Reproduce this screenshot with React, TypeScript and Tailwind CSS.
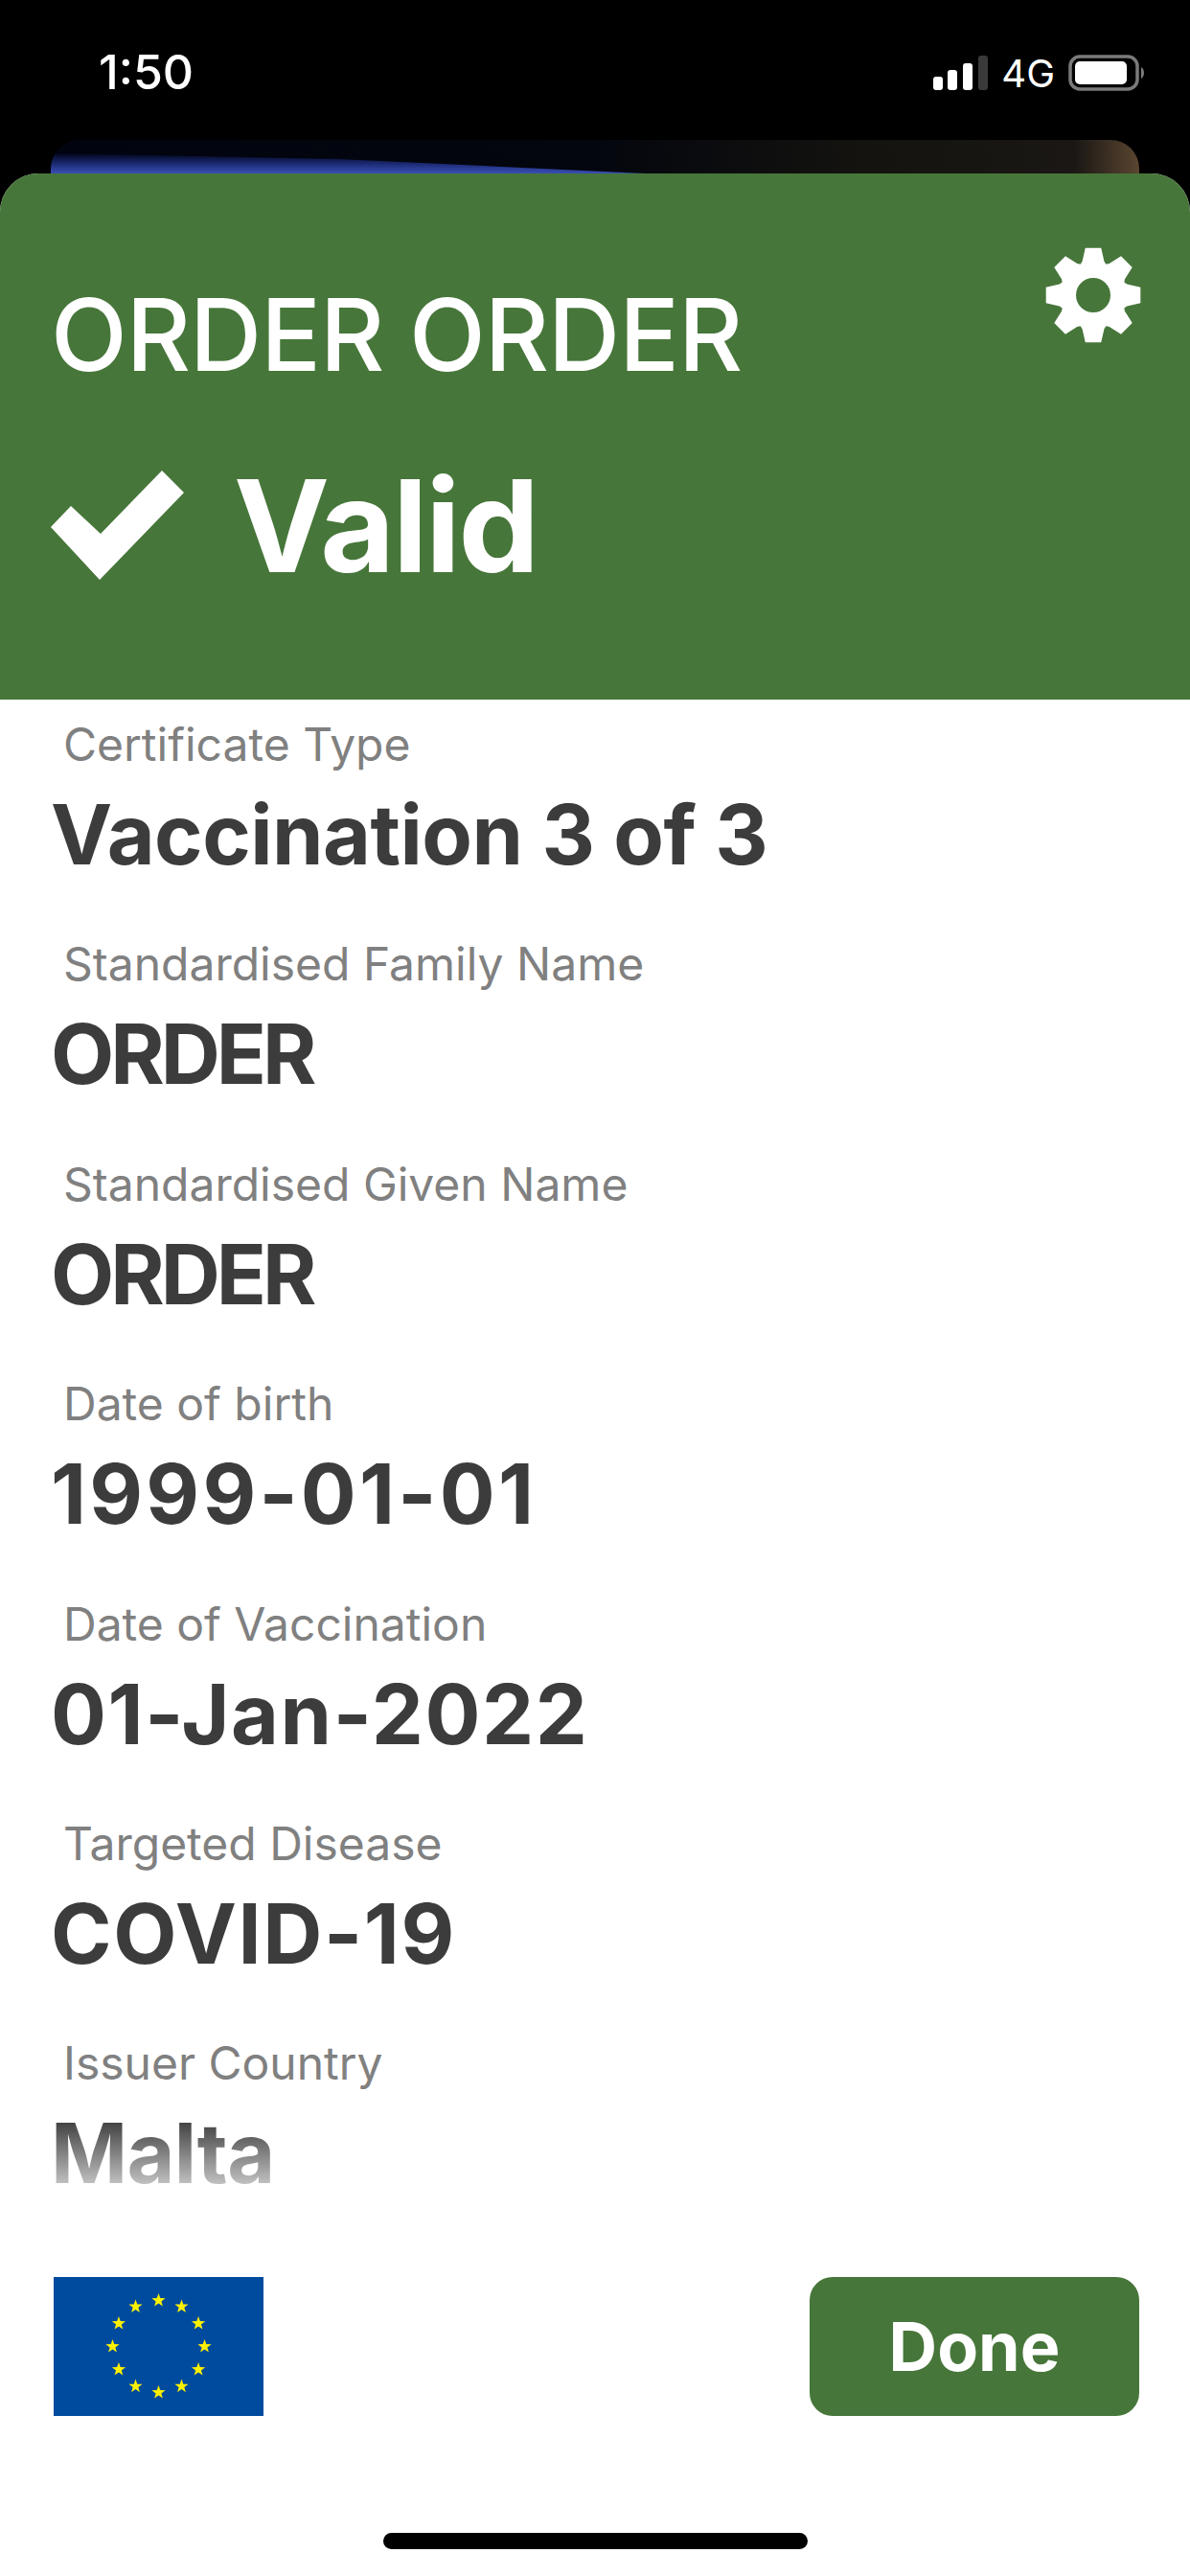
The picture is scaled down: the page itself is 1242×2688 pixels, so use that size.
import React from "react";

const rows = [
  ["Certificate Type", "Vaccination 3 of 3", "tracking-[-0.5px]"],
  ["Standardised Family Name", "ORDER", "tracking-[-4px]"],
  ["Standardised Given Name", "ORDER", "tracking-[-4px]"],
  ["Date of birth", "1999-01-01", "tracking-[3.2px]"],
  ["Date of Vaccination", "01-Jan-2022", "tracking-[1.6px]"],
  ["Targeted Disease", "COVID-19", "tracking-[1.6px]"],
  ["Issuer Country", "Malta", "tracking-[-0.6px]"],
];

function gearPath(cx: number, cy: number) {
  const pts: string[] = [];
  for (let i = 0; i < 8; i++) {
    const a = (i * 45 - 90) * (Math.PI / 180);
    const list: [number, number][] = [
      [35, -22.5],
      [37, -18],
      [50, -9.5],
      [50, 9.5],
      [37, 18],
    ];
    for (const [r, d] of list) {
      const t = a + (d * Math.PI) / 180;
      pts.push(`${(cx + r * Math.cos(t)).toFixed(2)} ${(cy + r * Math.sin(t)).toFixed(2)}`);
    }
  }
  return `M${pts.join("L")}Z M${cx + 18} ${cy}a18 18 0 1 0 -36 0a18 18 0 1 0 36 0Z`;
}

function starPath(cx: number, cy: number, R: number) {
  const pts: string[] = [];
  for (let i = 0; i < 10; i++) {
    const r = i % 2 === 0 ? R : R * 0.4;
    const a = ((i * 36 - 90) * Math.PI) / 180;
    pts.push(`${(cx + r * Math.cos(a)).toFixed(2)} ${(cy + r * Math.sin(a)).toFixed(2)}`);
  }
  return `M${pts.join("L")}Z`;
}

function Flag() {
  const stars = Array.from({ length: 12 }, (_, i) => {
    const a = ((i * 30 - 90) * Math.PI) / 180;
    return starPath(109.5 + 48 * Math.cos(a), 72.5 + 48 * Math.sin(a), 7.5);
  });
  return (
    <svg width="219" height="145" viewBox="0 0 219 145" className="block">
      <rect width="219" height="145" fill="#004b9d" />
      {stars.map((d, i) => (
        <path key={i} d={d} fill="#fff200" />
      ))}
    </svg>
  );
}

export default function App() {
  return (
    <div className="w-[1242px] h-[2688px] bg-black flex flex-col overflow-hidden font-['Inter',sans-serif]">
      <div className="h-[146px] flex justify-between pl-[103px] pr-[46px] pt-[50px] shrink-0">
        <span className="text-white text-[50px] leading-[50px] font-medium">1:50</span>
        <div className="flex items-start pt-[7px]">
          <svg width="57" height="36" viewBox="0 0 57 36" className="mt-[1px]">
            <rect x="0" y="22" width="10" height="14" rx="3" fill="#fff" />
            <rect x="15" y="15" width="10" height="21" rx="3" fill="#fff" />
            <rect x="31" y="8" width="10" height="28" rx="3" fill="#fff" />
            <rect x="47" y="0" width="10" height="36" rx="3" fill="#3a3a3a" />
          </svg>
          <span className="ml-[14px] mr-[14px] text-white text-[40px] leading-[40px] font-normal">4G</span>
          <svg width="81" height="38" viewBox="0 0 81 38">
            <rect x="2" y="2" width="70" height="34" rx="10" fill="none" stroke="#7a7a7a" strokeWidth="3.5" />
            <rect x="7" y="7" width="54" height="24" rx="5" fill="#fff" />
            <path d="M76 13 C80 15 80 23 76 25 Z" fill="#7a7a7a" />
          </svg>
        </div>
      </div>

      <div className="h-[35px] mx-[53px] rounded-t-[30px] overflow-hidden shrink-0">
        <svg width="1136" height="35" viewBox="0 0 1136 35" preserveAspectRatio="none" className="block">
          <defs>
            <linearGradient id="blue" x1="0" y1="0" x2="0" y2="1">
              <stop offset="0" stopColor="#01051a" />
              <stop offset="0.55" stopColor="#1d2c78" />
              <stop offset="1" stopColor="#3a4fb4" />
            </linearGradient>
            <linearGradient id="top" x1="0" y1="0" x2="1" y2="0">
              <stop offset="0" stopColor="#01030f" />
              <stop offset="0.5" stopColor="#04060e" />
              <stop offset="0.75" stopColor="#14130f" />
              <stop offset="0.94" stopColor="#1a1714" />
              <stop offset="1" stopColor="#5a4530" />
            </linearGradient>
          </defs>
          <rect width="1136" height="35" fill="url(#top)" />
          <path d="M0 14 L300 20 L620 35 L0 35 Z" fill="url(#blue)" />
        </svg>
      </div>

      <div className="flex-1 bg-white rounded-t-[40px] overflow-hidden flex flex-col">
        <div className="h-[549px] bg-[#47763a] pl-[53px] pr-[50px] shrink-0 flex flex-col">
          <div className="flex justify-between h-[299px]">
            <h1 className="mt-[108px] text-white text-[104px] leading-[120px] font-medium tracking-[-1px] h-[120px]">ORDER ORDER</h1>
            <svg width="102" height="102" viewBox="0 0 102 102" className="mt-[76px]">
              <path d={gearPath(51, 51)} fill="#fff" fillRule="evenodd" />
            </svg>
          </div>
          <div className="flex items-center mt-[3px]">
            <svg width="139" height="114" viewBox="0 0 139 114">
              <path d="M0 59 L21 37 L52 66 L116 0 L139 23 L51 114 Z" fill="#fff" />
            </svg>
            <span className="ml-[52px] text-white text-[134px] leading-[130px] font-bold tracking-[-2px]">Valid</span>
          </div>
        </div>

        <div className="relative h-[1551px] shrink-0 pl-[53px] pt-[19px]">
          {rows.map(([label, value, tracking]) => (
            <div key={value + label} className="h-[229.4px] flex flex-col">
              <span className="pl-[13px] text-[#808080] text-[48px] leading-[56px] font-normal">{label}</span>
              <span className={`mt-[16px] text-[#3c3c3c] text-[86px] leading-[100px] font-bold ${tracking}`}>{value}</span>
            </div>
          ))}
          <div className="absolute left-0 right-0 bottom-0 h-[70px] bg-gradient-to-b from-white/0 to-white/70" />
        </div>

        <div className="flex justify-between items-start pl-[56px] pr-[53px] pt-[95px]">
          <Flag />
          <button className="w-[344px] h-[145px] rounded-[24px] bg-[#47763a] text-white text-[70px] font-bold">Done</button>
        </div>
        <div className="mt-[122px] mx-auto w-[443px] h-[17px] rounded-full bg-black" />
      </div>
    </div>
  );
}
